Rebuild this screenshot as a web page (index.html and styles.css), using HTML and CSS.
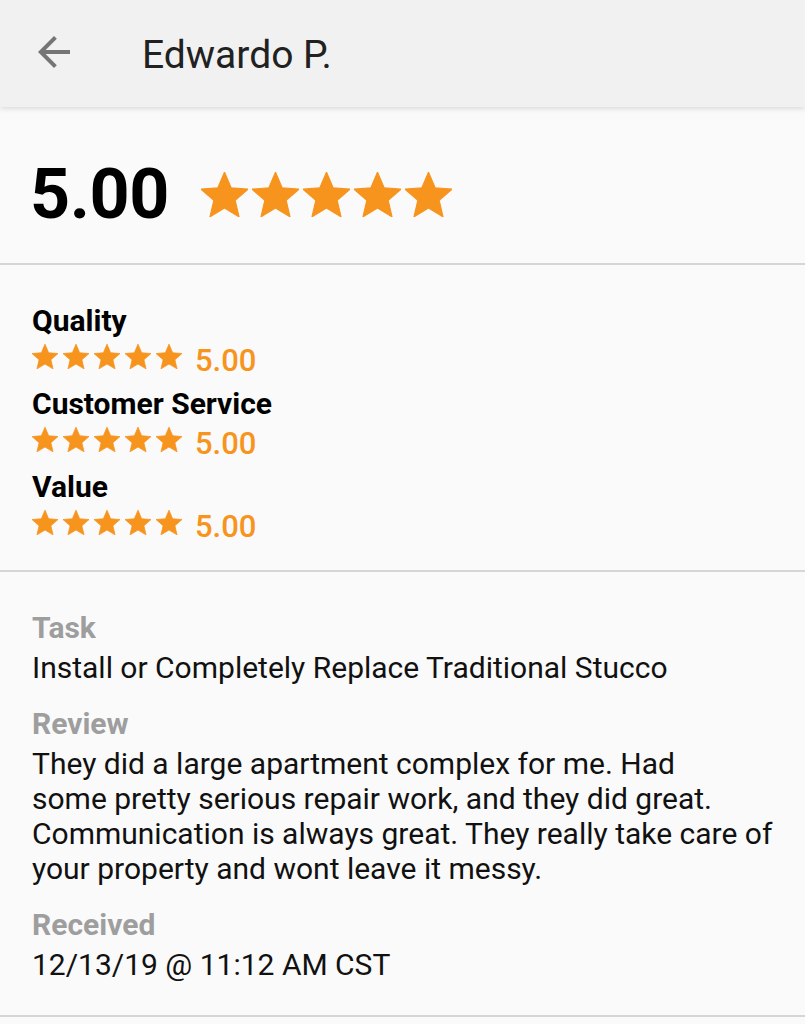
FILE: index.html
```html
<!DOCTYPE html>
<html>
<head>
<meta charset="utf-8">
<link rel="stylesheet" href="styles.css">
</head>
<body>
<header class="appbar">
  <svg class="back" viewBox="0 0 24 24"><path d="M20 11H7.83l5.59-5.59L12 4l-8 8 8 8 1.41-1.41L7.83 13H20v-2z"/></svg>
  <h1 class="title">Edwardo P.</h1>
</header>

<section class="overall">
  <div class="score">5.00</div>
  <div class="stars big">
    <svg viewBox="2 2 20 19"><path d="M12 17.27L18.18 21l-1.64-7.03L22 9.24l-7.19-.61L12 2 9.19 8.63 2 9.24l5.46 4.73L5.82 21z"/></svg>
    <svg viewBox="2 2 20 19"><path d="M12 17.27L18.18 21l-1.64-7.03L22 9.24l-7.19-.61L12 2 9.19 8.63 2 9.24l5.46 4.73L5.82 21z"/></svg>
    <svg viewBox="2 2 20 19"><path d="M12 17.27L18.18 21l-1.64-7.03L22 9.24l-7.19-.61L12 2 9.19 8.63 2 9.24l5.46 4.73L5.82 21z"/></svg>
    <svg viewBox="2 2 20 19"><path d="M12 17.27L18.18 21l-1.64-7.03L22 9.24l-7.19-.61L12 2 9.19 8.63 2 9.24l5.46 4.73L5.82 21z"/></svg>
    <svg viewBox="2 2 20 19"><path d="M12 17.27L18.18 21l-1.64-7.03L22 9.24l-7.19-.61L12 2 9.19 8.63 2 9.24l5.46 4.73L5.82 21z"/></svg>
  </div>
</section>

<section class="categories">
  <div class="cat">
    <div class="cat-name">Quality</div>
    <div class="cat-row">
      <div class="stars small">
        <svg viewBox="2 2 20 19"><path d="M12 17.27L18.18 21l-1.64-7.03L22 9.24l-7.19-.61L12 2 9.19 8.63 2 9.24l5.46 4.73L5.82 21z"/></svg>
        <svg viewBox="2 2 20 19"><path d="M12 17.27L18.18 21l-1.64-7.03L22 9.24l-7.19-.61L12 2 9.19 8.63 2 9.24l5.46 4.73L5.82 21z"/></svg>
        <svg viewBox="2 2 20 19"><path d="M12 17.27L18.18 21l-1.64-7.03L22 9.24l-7.19-.61L12 2 9.19 8.63 2 9.24l5.46 4.73L5.82 21z"/></svg>
        <svg viewBox="2 2 20 19"><path d="M12 17.27L18.18 21l-1.64-7.03L22 9.24l-7.19-.61L12 2 9.19 8.63 2 9.24l5.46 4.73L5.82 21z"/></svg>
        <svg viewBox="2 2 20 19"><path d="M12 17.27L18.18 21l-1.64-7.03L22 9.24l-7.19-.61L12 2 9.19 8.63 2 9.24l5.46 4.73L5.82 21z"/></svg>
      </div>
      <span class="cat-score">5.00</span>
    </div>
  </div>
  <div class="cat">
    <div class="cat-name">Customer Service</div>
    <div class="cat-row">
      <div class="stars small">
        <svg viewBox="2 2 20 19"><path d="M12 17.27L18.18 21l-1.64-7.03L22 9.24l-7.19-.61L12 2 9.19 8.63 2 9.24l5.46 4.73L5.82 21z"/></svg>
        <svg viewBox="2 2 20 19"><path d="M12 17.27L18.18 21l-1.64-7.03L22 9.24l-7.19-.61L12 2 9.19 8.63 2 9.24l5.46 4.73L5.82 21z"/></svg>
        <svg viewBox="2 2 20 19"><path d="M12 17.27L18.18 21l-1.64-7.03L22 9.24l-7.19-.61L12 2 9.19 8.63 2 9.24l5.46 4.73L5.82 21z"/></svg>
        <svg viewBox="2 2 20 19"><path d="M12 17.27L18.18 21l-1.64-7.03L22 9.24l-7.19-.61L12 2 9.19 8.63 2 9.24l5.46 4.73L5.82 21z"/></svg>
        <svg viewBox="2 2 20 19"><path d="M12 17.27L18.18 21l-1.64-7.03L22 9.24l-7.19-.61L12 2 9.19 8.63 2 9.24l5.46 4.73L5.82 21z"/></svg>
      </div>
      <span class="cat-score">5.00</span>
    </div>
  </div>
  <div class="cat">
    <div class="cat-name">Value</div>
    <div class="cat-row">
      <div class="stars small">
        <svg viewBox="2 2 20 19"><path d="M12 17.27L18.18 21l-1.64-7.03L22 9.24l-7.19-.61L12 2 9.19 8.63 2 9.24l5.46 4.73L5.82 21z"/></svg>
        <svg viewBox="2 2 20 19"><path d="M12 17.27L18.18 21l-1.64-7.03L22 9.24l-7.19-.61L12 2 9.19 8.63 2 9.24l5.46 4.73L5.82 21z"/></svg>
        <svg viewBox="2 2 20 19"><path d="M12 17.27L18.18 21l-1.64-7.03L22 9.24l-7.19-.61L12 2 9.19 8.63 2 9.24l5.46 4.73L5.82 21z"/></svg>
        <svg viewBox="2 2 20 19"><path d="M12 17.27L18.18 21l-1.64-7.03L22 9.24l-7.19-.61L12 2 9.19 8.63 2 9.24l5.46 4.73L5.82 21z"/></svg>
        <svg viewBox="2 2 20 19"><path d="M12 17.27L18.18 21l-1.64-7.03L22 9.24l-7.19-.61L12 2 9.19 8.63 2 9.24l5.46 4.73L5.82 21z"/></svg>
      </div>
      <span class="cat-score">5.00</span>
    </div>
  </div>
</section>

<section class="details">
  <div class="field">
    <div class="field-label">Task</div>
    <div class="field-value">Install or Completely Replace Traditional Stucco</div>
  </div>
  <div class="field">
    <div class="field-label">Review</div>
    <div class="field-value">They did a large apartment complex for me. Had<br>some pretty serious repair work, and they did great.<br>Communication is always great. They really take care of<br>your property and wont leave it messy.</div>
  </div>
  <div class="field">
    <div class="field-label">Received</div>
    <div class="field-value">12/13/19 @ 11:12 AM CST</div>
  </div>
</section>
</body>
</html>
```

FILE: styles.css
```css
html, body {
  margin: 0;
  padding: 0;
  background: #fafafa;
  font-family: Roboto, "Noto Sans", sans-serif;
}

.appbar {
  height: 107px;
  box-sizing: border-box;
  background: #f1f1f1;
  display: flex;
  align-items: flex-start;
  padding: 28px 0 0 30px;
  box-shadow: 0 2px 5px rgba(0, 0, 0, 0.12);
  position: relative;
  z-index: 1;
}

.back {
  width: 48px;
  height: 48px;
  fill: #757575;
  flex: none;
}

.title {
  margin: 5px 0 0 64px;
  font-size: 39px;
  line-height: 44px;
  font-weight: 400;
  color: #212121;
}

.overall {
  display: flex;
  align-items: flex-start;
  padding: 46px 0 0 30px;
  height: 158px;
  box-sizing: border-box;
  border-bottom: 2px solid #d6d6d6;
}

.score {
  font-size: 70px;
  line-height: 82px;
  font-weight: 700;
  color: #000;
  letter-spacing: -0.5px;
}

.stars {
  display: flex;
  fill: #f7941d;
  stroke: #f7941d;
  stroke-linejoin: round;
}

.stars.big {
  margin: 19px 0 0 32px;
  gap: 4px;
}

.stars.big svg {
  width: 47px;
  height: 45px;
  stroke-width: 0.5px;
}

.categories {
  padding: 38px 0 0 32px;
  height: 307px;
  box-sizing: border-box;
  border-bottom: 2px solid #d6d6d6;
}

.cat {
  margin-bottom: 7px;
}

.cat-name {
  font-size: 30px;
  line-height: 36px;
  font-weight: 700;
  color: #000;
}

.cat-row {
  display: flex;
  align-items: flex-start;
  margin-top: 4px;
  height: 36px;
}

.stars.small {
  gap: 5px;
  margin-top: 1px;
}

.stars.small svg {
  width: 26px;
  height: 25px;
  stroke-width: 0.6px;
}

.cat-score {
  margin-left: 13px;
  font-size: 31px;
  line-height: 36px;
  font-weight: 500;
  color: #f7941d;
}

.details {
  padding: 38px 0 0 32px;
  height: 445px;
  box-sizing: border-box;
  border-bottom: 2px solid #d6d6d6;
}

.field {
  margin-bottom: 21px;
}

.field-label {
  font-size: 30px;
  line-height: 36px;
  font-weight: 700;
  color: #9e9e9e;
}

.field-value {
  margin-top: 4px;
  font-size: 30px;
  line-height: 35px;
  font-weight: 400;
  color: #111;
  white-space: nowrap;
}
```
